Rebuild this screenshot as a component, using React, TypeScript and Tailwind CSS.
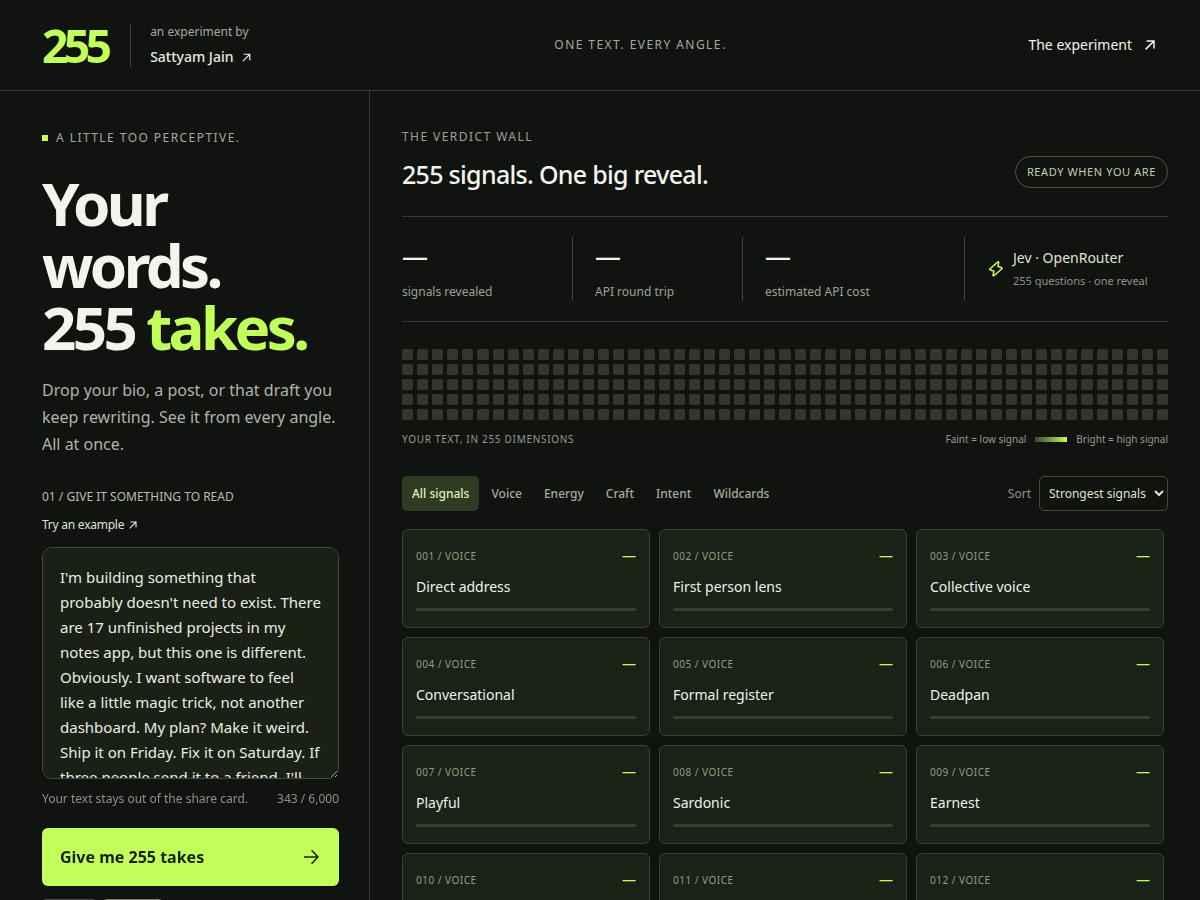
const SAMPLE_TEXT =
  "I'm building something that probably doesn't need to exist. There are 17 unfinished projects in my notes app, but this one is different. Obviously. I want software to feel like a little magic trick, not another dashboard. My plan? Make it weird. Ship it on Friday. Fix it on Saturday. If three people send it to a friend, I'll";

const SIGNALS = [
  "Direct address",
  "First person lens",
  "Collective voice",
  "Conversational",
  "Formal register",
  "Deadpan",
  "Playful",
  "Sardonic",
  "Earnest",
  "",
  "",
  "",
];

const STATS = ["signals revealed", "API round trip", "estimated API cost"];
const TABS = ["All signals", "Voice", "Energy", "Craft", "Intent", "Wildcards"];
const CELLS = Array.from({ length: 255 }, (_, i) => i);

function ArrowUpRight({ size }: { size: number }) {
  return (
    <svg width={size} height={size} viewBox="0 0 16 16" fill="none" stroke="currentColor" strokeWidth="1.5" aria-hidden="true">
      <path d="M3.6 12.4 12 4M4.6 4H12v7.4" />
    </svg>
  );
}

function ArrowRight() {
  return (
    <svg width="20" height="20" viewBox="0 0 20 20" fill="none" stroke="currentColor" strokeWidth="1.6" strokeLinecap="round" strokeLinejoin="round" aria-hidden="true">
      <path d="M3.5 10H17M11 3.8 17 10l-6 6.2" />
    </svg>
  );
}

function Bolt() {
  return (
    <svg width="18" height="18" viewBox="0 0 18 18" fill="none" stroke="#c3ff5a" strokeWidth="1.5" strokeLinecap="round" strokeLinejoin="round" className="shrink-0" aria-hidden="true">
      <path d="M10.9 1.9 3 8.7c-.4.4-.3.8.1 1l3.9 1.5-1 4c-.1.6.5.8.9.5l8-6.9c.4-.4.3-.8-.1-1l-3.9-1.5.9-3.9c.1-.6-.5-.8-.9-.5Z" />
    </svg>
  );
}

function Header() {
  return (
    <header className="flex h-[91px] shrink-0 items-center justify-between border-b border-[#363835] px-[42px]">
      <div className="flex items-center">
        <a href="#top" className="text-[46px] leading-[46px] font-bold tracking-[-0.1em] text-[#c3ff5a]">
          255
        </a>
        <div className="ml-[23px] flex h-11 flex-col justify-between border-l border-[#40433c] pl-[19px]">
          <span className="text-xs leading-[18px] text-[#a6a99f]">an experiment by</span>
          <a href="#author" className="flex items-center gap-1.5 text-sm leading-5 font-medium text-[#e6eadf]">
            Sattyam Jain
            <ArrowUpRight size={13} />
          </a>
        </div>
      </div>
      <p className="text-xs leading-[18px] tracking-[0.12em] text-[#a6a99f]">ONE TEXT. EVERY ANGLE.</p>
      <a href="#experiment" className="flex items-center gap-2.5 text-sm leading-5 text-[#f2f4ed]">
        The experiment
        <ArrowUpRight size={16} />
      </a>
    </header>
  );
}

function Composer() {
  return (
    <aside className="flex w-[370px] shrink-0 flex-col overflow-y-auto border-r border-[#363835] pt-[38px] pr-[30px] pl-[42px] [scrollbar-width:none]">
      <p className="flex shrink-0 items-center gap-2 text-xs leading-[18px] tracking-[0.12em] text-[#a6a99f]">
        <span className="size-1.5 bg-[#c3ff5a]" />A LITTLE TOO PERCEPTIVE.
      </p>
      <h1 className="mt-[25px] text-[60px] leading-[62px] font-bold tracking-[-0.06em] text-[#f2f4ed]">
        Your
        <br />
        words.
        <br />
        255 <span className="text-[#c3ff5a]">takes.</span>
      </h1>
      <p className="mt-[19px] text-base leading-[27px] text-[#b0b3a9]">
        Drop your bio, a post, or that draft you keep rewriting. See it from every angle. All at once.
      </p>
      <label htmlFor="source" className="mt-[30px] text-xs leading-[18px] text-[#b9bdae]">
        01 / GIVE IT SOMETHING TO READ
      </label>
      <button
        type="button"
        className="mt-2.5 flex items-center gap-[3px] self-start text-xs leading-[18px] tracking-[-0.02em] text-[#dfe3d6]"
      >
        Try an example
        <ArrowUpRight size={12} />
      </button>
      <textarea
        id="source"
        defaultValue={SAMPLE_TEXT}
        className="mt-[13px] h-[232px] shrink-0 resize-y overflow-y-auto rounded-[10px] border border-[#434a3a] bg-[#1a2016] p-[17px] text-[15px] leading-[25px] text-[#e9eee0] outline-none [scrollbar-width:none]"
      />
      <div className="mt-[11px] flex justify-between text-xs leading-[18px] text-[#8e9287]">
        <span>Your text stays out of the share card.</span>
        <span>343 / 6,000</span>
      </div>
      <button
        type="button"
        className="mt-5 flex h-[58px] shrink-0 items-center justify-between rounded-md bg-[#c3ff5a] px-[18px] text-base font-bold text-[#172008]"
      >
        Give me 255 takes
        <ArrowRight />
      </button>
      <div className="mt-[13px] flex shrink-0 gap-1.5">
        <span className="h-6 w-[55px] rounded-sm border border-[#4a4c47]" />
        <span className="h-6 w-[60px] rounded-sm border border-[#78805f]" />
      </div>
    </aside>
  );
}

function Stats() {
  return (
    <div className="grid grid-cols-[171fr_170fr_222fr_203fr] border-y border-[#363835] py-5">
      {STATS.map((label, i) => (
        <div key={label} className={i === 0 ? "h-16 border-r border-[#40433c]" : "h-16 border-r border-[#40433c] pl-[22px]"}>
          <div className="text-[26px] leading-[38px] font-medium text-[#f2f4ed]">—</div>
          <div className="mt-2 text-xs leading-[18px] text-[#9da196]">{label}</div>
        </div>
      ))}
      <div className="flex items-center gap-2 pl-[22px]">
        <Bolt />
        <div>
          <div className="text-sm leading-5 text-[#dfe5d3]">Jev · OpenRouter</div>
          <div className="mt-1 text-[11px] leading-[18px] text-[#8e9287]">255 questions · one reveal</div>
        </div>
      </div>
    </div>
  );
}

function SignalMap() {
  return (
    <>
      <div className="mt-[27px] grid grid-cols-[repeat(51,minmax(0,1fr))] gap-1">
        {CELLS.map((cell) => (
          <span key={cell} className="h-[11px] rounded-xs bg-[#33362d]" />
        ))}
      </div>
      <div className="mt-2.5 flex items-center justify-between text-[10px] leading-[18px] text-[#959a8c]">
        <span className="tracking-[0.07em]">YOUR TEXT, IN 255 DIMENSIONS</span>
        <span className="flex items-center gap-[9px]">
          Faint = low signal
          <span className="h-[5px] w-8 bg-linear-to-r from-[#3a4a2c] to-[#c3ff5a]" />
          Bright = high signal
        </span>
      </div>
    </>
  );
}

function Toolbar() {
  return (
    <div className="mt-7 flex items-center justify-between">
      <nav className="flex gap-0.5">
        {TABS.map((tab, i) => (
          <button
            key={tab}
            type="button"
            className={
              i === 0
                ? "h-[35px] rounded-[5px] bg-[#303b24] px-2.5 text-xs font-medium text-[#dcf5b5]"
                : "h-[35px] rounded-[5px] px-2.5 text-xs font-medium text-[#a6ab9c]"
            }
          >
            {tab}
          </button>
        ))}
      </nav>
      <div className="flex items-center gap-2">
        <label htmlFor="sort" className="text-xs text-[#8e9287]">
          Sort
        </label>
        <select
          id="sort"
          className="h-[35px] rounded-[5px] border border-[#434a3a] bg-[#111310] px-[5px] text-xs text-[#dfe5d3]"
        >
          <option>Strongest signals</option>
        </select>
      </div>
    </div>
  );
}

function SignalCard({ index, name }: { index: number; name: string }) {
  return (
    <article className="h-[99px] rounded-md border border-[#35422e] bg-[#1a2116] px-[13px] pt-[17px]">
      <div className="flex h-[18px] items-center justify-between">
        <span className="text-[10px] leading-[18px] tracking-[0.05em] text-[#8f9f80]">
          {String(index + 1).padStart(3, "0")} / VOICE
        </span>
        <span className="text-sm leading-5 text-[#c3ff5a]">—</span>
      </div>
      <h3 className="mt-3 h-5 text-sm leading-5 text-[#eff2e9]">{name}</h3>
      <div className="mt-[11px] h-[3px] rounded-full bg-[#363f2e]" />
    </article>
  );
}

export default function App() {
  return (
    <div className="flex h-screen flex-col bg-[#111310] font-['Noto_Sans',sans-serif] text-[#f2f4ed]">
      <Header />
      <div className="flex min-h-0 flex-1">
        <Composer />
        <main className="min-w-0 flex-1 overflow-y-auto px-8 pt-[37px] [scrollbar-width:none]">
          <div className="flex items-end justify-between pb-[25px]">
            <div>
              <p className="text-xs leading-[18px] tracking-[0.12em] text-[#9da196]">THE VERDICT WALL</p>
              <h2 className="mt-[11px] text-[25px] leading-[34px] font-medium tracking-[-0.028em]">
                255 signals. One big reveal.
              </h2>
            </div>
            <span className="mb-[3px] flex h-8 items-center rounded-full border border-[#4b5340] px-[11px] text-[11px] tracking-[0.055em] text-[#c3cfb0]">
              READY WHEN YOU ARE
            </span>
          </div>
          <Stats />
          <SignalMap />
          <Toolbar />
          <section className="mt-[18px] grid grid-cols-3 gap-[9px] pr-1 pb-8">
            {SIGNALS.map((name, i) => (
              <SignalCard key={i} index={i} name={name} />
            ))}
          </section>
        </main>
      </div>
    </div>
  );
}
